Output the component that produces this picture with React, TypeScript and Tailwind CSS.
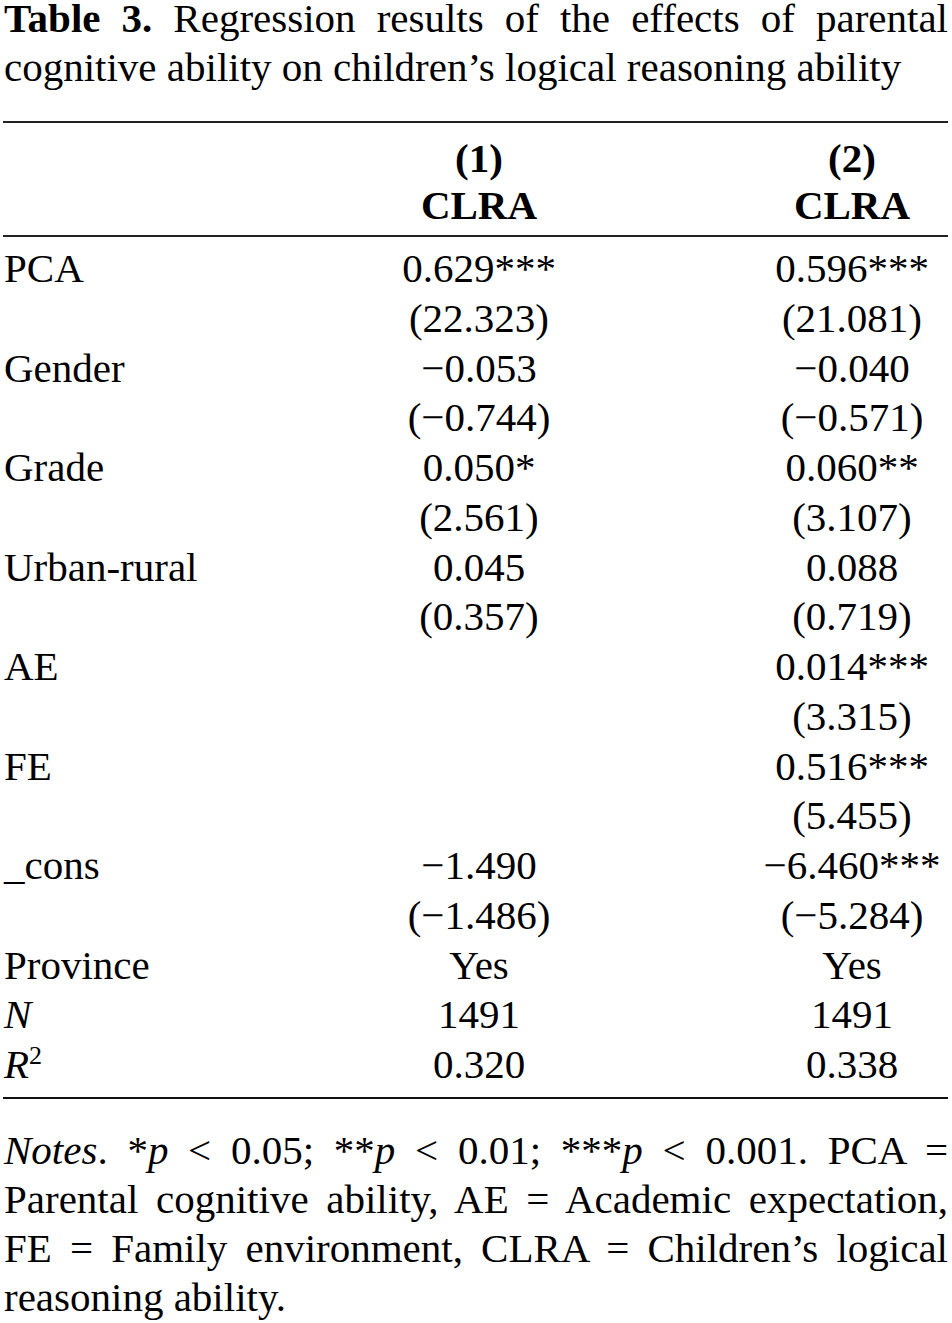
import React from 'react';

const rows: { label: React.ReactNode; a: string; b: string }[] = [
  { label: 'PCA', a: '0.629***', b: '0.596***' },
  { label: '', a: '(22.323)', b: '(21.081)' },
  { label: 'Gender', a: '\u22120.053', b: '\u22120.040' },
  { label: '', a: '(\u22120.744)', b: '(\u22120.571)' },
  { label: 'Grade', a: '0.050*', b: '0.060**' },
  { label: '', a: '(2.561)', b: '(3.107)' },
  { label: 'Urban-rural', a: '0.045', b: '0.088' },
  { label: '', a: '(0.357)', b: '(0.719)' },
  { label: 'AE', a: '', b: '0.014***' },
  { label: '', a: '', b: '(3.315)' },
  { label: 'FE', a: '', b: '0.516***' },
  { label: '', a: '', b: '(5.455)' },
  { label: '_cons', a: '\u22121.490', b: '\u22126.460***' },
  { label: '', a: '(\u22121.486)', b: '(\u22125.284)' },
  { label: 'Province', a: 'Yes', b: 'Yes' },
  { label: <i>N</i>, a: '1491', b: '1491' },
  {
    label: (
      <>
        <i>R</i>
        <span className="text-[26px] relative -top-[14px]">2</span>
      </>
    ),
    a: '0.320',
    b: '0.338',
  },
];

const App = () => {
  return (
    <main className="w-[952px] h-[1323px] bg-white overflow-hidden text-black [font-family:'Liberation_Serif','Times_New_Roman',serif] text-[41px]">
      <div className="ml-[3px] w-[945px]">
        {/* caption */}
        <div className="pl-[1px]">
          <div className="h-[43px] leading-[37px] whitespace-nowrap text-justify [text-align-last:justify]">
            <b>Table 3.</b> Regression results of the effects of parental
          </div>
          <div className="leading-[49px] whitespace-nowrap">
            cognitive ability on children’s logical reasoning ability
          </div>
        </div>

        {/* table */}
        <div className="mt-[29px] border-t-2 border-[#222]" />
        <div className="flex pt-[12px] pb-[6px] font-bold leading-[47px]">
          <div className="w-[380px]" />
          <div className="w-[192px] text-center">
            <div>(1)</div>
            <div>CLRA</div>
          </div>
          <div className="w-[181px]" />
          <div className="w-[192px] text-center">
            <div>(2)</div>
            <div>CLRA</div>
          </div>
        </div>
        <div className="border-t-2 border-[#222]" />
        <div className="pt-[7px] pb-[7px] leading-[49.75px]">
          {rows.map((r, i) => (
            <div key={i} className="flex h-[49.75px] whitespace-nowrap">
              <div className="w-[380px] pl-[1px]">{r.label}</div>
              <div className="w-[192px] text-center">{r.a}</div>
              <div className="w-[181px]" />
              <div className="w-[192px] text-center">{r.b}</div>
            </div>
          ))}
        </div>
        <div className="border-t-2 border-[#111]" />

        {/* notes */}
        <div className="mt-[27px] leading-[49px] pl-[1px]">
          <div className="whitespace-nowrap text-justify [text-align-last:justify]">
            <i>Notes</i>. *<i>p</i> &lt; 0.05; **<i>p</i> &lt; 0.01; ***<i>p</i> &lt; 0.001. PCA =
          </div>
          <div className="whitespace-nowrap text-justify [text-align-last:justify]">
            Parental cognitive ability, AE = Academic expectation,
          </div>
          <div className="whitespace-nowrap text-justify [text-align-last:justify]">
            FE = Family environment, CLRA = Children’s logical
          </div>
          <div className="whitespace-nowrap">reasoning ability.</div>
        </div>
      </div>
    </main>
  );
};

export default App;
